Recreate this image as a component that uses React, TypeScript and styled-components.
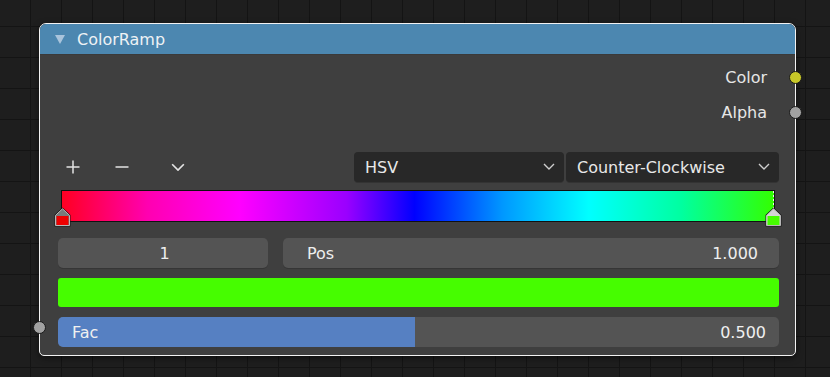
import styled, { createGlobalStyle } from "styled-components";

const GlobalStyle = createGlobalStyle`
  html, body {
    margin: 0;
    padding: 0;
    background: #1e1e1e;
  }
  * { box-sizing: border-box; }
`;

const Canvas = styled.div`
  width: 830px;
  height: 377px;
  padding: 23px 0 0 39px;
  overflow: hidden;
  background-color: #1e1e1e;
  background-image:
    linear-gradient(to right, #141414 1px, transparent 1px),
    linear-gradient(to bottom, #141414 1px, transparent 1px);
  background-size: 31px 31px;
  background-position: -1px 26px;
  font-family: "DejaVu Sans", "Liberation Sans", sans-serif;
  font-size: 16px;
  color: #e6e6e6;
`;

const Node = styled.div`
  position: relative;
  width: 757px;
  height: 333px;
  border: 1px solid #f2f2f2;
  border-radius: 7px 7px 5px 5px;
  background: #3f3f3f;
  display: flex;
  flex-direction: column;
  box-shadow: 0 2px 6px rgba(0, 0, 0, 0.5);
`;

const Header = styled.div`
  height: 31px;
  display: flex;
  align-items: center;
  gap: 12px;
  padding-left: 15px;
  background: #4c87b0;
  border-radius: 6px 6px 0 0;
  border-bottom: 1px solid #3a3a3a;
  color: #eef2f5;
  font-size: 16px;
`;

const Collapse = styled.span`
  width: 0;
  height: 0;
  border-left: 5px solid transparent;
  border-right: 5px solid transparent;
  border-top: 9px solid #a9c4dc;
  margin-top: 1px;
`;

const Outputs = styled.div`
  display: flex;
  flex-direction: column;
  padding-top: 5px;
`;

const OutputRow = styled.div`
  position: relative;
  height: 35px;
  display: flex;
  align-items: center;
  justify-content: flex-end;
  padding-right: 28px;
`;

const Socket = styled.span<{ $color: string; $side: "left" | "right" }>`
  position: absolute;
  top: 50%;
  ${(p) => (p.$side === "right" ? "right: -7px;" : "left: -7px;")}
  width: 13px;
  height: 13px;
  margin-top: -6.5px;
  border-radius: 50%;
  background: ${(p) => p.$color};
  border: 1px solid #1a1a1a;
`;

const Body = styled.div`
  display: flex;
  flex-direction: column;
  padding: 22px 16px 0 18px;
`;

const Toolbar = styled.div`
  height: 30px;
  display: flex;
  align-items: center;
`;

const ToolButton = styled.span`
  width: 30px;
  height: 30px;
  display: flex;
  align-items: center;
  justify-content: center;
  color: #e0e0e0;
`;

const ToolIcons = styled.div`
  display: flex;
  gap: 19px;
  flex: 1;
  & > span:nth-child(3) { margin-left: 7px; }
`;

const Dropdowns = styled.div`
  display: flex;
  gap: 2px;
`;

const Dropdown = styled.div<{ $w: number }>`
  width: ${(p) => p.$w}px;
  height: 30px;
  display: flex;
  align-items: center;
  justify-content: space-between;
  padding: 0 9px 0 11px;
  background: #282828;
  border-radius: 4px;
  color: #e8e8e8;
  box-shadow: 0 1px 0 #333;
`;

const RampWrap = styled.div`
  position: relative;
  height: 37px;
  margin: 8px 4px 0 3px;
`;

const Ramp = styled.div`
  height: 32px;
  border: 1px solid #111;
  background: linear-gradient(
    to right,
    #ff0022 0%,
    #ff00b0 12%,
    #ff00ff 25%,
    #9a00ff 40%,
    #0000ff 49.5%,
    #0099ff 62%,
    #00ffff 74%,
    #00ffa0 87%,
    #33ff00 100%
  );
`;

const Marker = styled.svg<{ $x: number }>`
  position: absolute;
  left: ${(p) => p.$x}px;
  top: 0;
  overflow: visible;
`;

const FieldRow = styled.div`
  display: flex;
  gap: 15px;
  margin-top: 11px;
`;

const Field = styled.div<{ $w?: number; $center?: boolean }>`
  ${(p) => (p.$w ? `width: ${p.$w}px;` : "flex: 1;")}
  height: 30px;
  display: flex;
  align-items: center;
  justify-content: ${(p) => (p.$center ? "center" : "space-between")};
  padding: 0 21px 0 24px;
  background: #545454;
  border-radius: 5px;
  color: #eeeeee;
  box-shadow: 0 1px 0 #363636;
`;

const Swatch = styled.div`
  height: 29px;
  margin-top: 10px;
  background: #46fd00;
  border-radius: 3px;
`;

const Slider = styled.div`
  position: relative;
  height: 30px;
  margin-top: 10px;
  background: #545454;
  border-radius: 5px;
  overflow: hidden;
  display: flex;
  align-items: center;
  justify-content: space-between;
  padding: 0 13px 0 14px;
  color: #f0f0f0;
`;

const SliderFill = styled.div`
  position: absolute;
  left: 0;
  top: 0;
  bottom: 0;
  background: #5680c2;
`;

const SliderLabel = styled.span`
  position: relative;
`;

const InputSocketRow = styled.div`
  position: relative;
`;

const Chevron = ({ size = 12, color = "#cfcfcf" }: { size?: number; color?: string }) => (
  <svg width={size} height={size * 0.6} viewBox="0 0 12 7">
    <path d="M1 1 L6 6 L11 1" fill="none" stroke={color} strokeWidth="1.4" />
  </svg>
);

const MarkerShape = ({ fill, top }: { fill: string; top: string }) => (
  <g>
    <path d="M0.5 19.5 V8 L8.5 0.5 L16.5 8 V19.5 Z" fill="#1a1a1a" />
    <path d="M1.5 18.5 V8.4 L8.5 1.8 L15.5 8.4 V18.5 Z" fill={top} stroke="#b8b8b8" strokeWidth="1" />
    <rect x="2.5" y="9" width="12" height="9" fill={fill} />
  </g>
);

const App = () => {
  const fac = 0.5;
  return (
    <>
      <GlobalStyle />
      <Canvas>
        <Node>
          <Header>
            <Collapse />
            <span>ColorRamp</span>
          </Header>
          <Outputs>
            <OutputRow>
              Color
              <Socket $side="right" $color="#c8c828" />
            </OutputRow>
            <OutputRow>
              Alpha
              <Socket $side="right" $color="#a1a1a1" />
            </OutputRow>
          </Outputs>
          <Body>
            <Toolbar>
              <ToolIcons>
                <ToolButton>
                  <svg width="14" height="14" viewBox="0 0 14 14">
                    <path d="M7 0.5 V13.5 M0.5 7 H13.5" stroke="#e4e4e4" strokeWidth="1.5" />
                  </svg>
                </ToolButton>
                <ToolButton>
                  <svg width="14" height="14" viewBox="0 0 14 14">
                    <path d="M0.5 7 H13.5" stroke="#e4e4e4" strokeWidth="1.5" />
                  </svg>
                </ToolButton>
                <ToolButton>
                  <Chevron size={14} color="#e4e4e4" />
                </ToolButton>
              </ToolIcons>
              <Dropdowns>
                <Dropdown $w={210}>
                  HSV
                  <Chevron />
                </Dropdown>
                <Dropdown $w={213}>
                  Counter-Clockwise
                  <Chevron />
                </Dropdown>
              </Dropdowns>
            </Toolbar>
            <RampWrap>
              <Ramp />
              <Marker $x={-7} width="17" height="37" viewBox="0 0 17 37">
                <g transform="translate(0,17)">
                  <MarkerShape fill="#ee0000" top="#7a7a7a" />
                </g>
              </Marker>
              <Marker $x={704} width="17" height="37" viewBox="0 0 17 37">
                <path d="M8.5 1 V18" stroke="#f0f0f0" strokeWidth="1" strokeDasharray="2 2" />
                <g transform="translate(0,17)">
                  <MarkerShape fill="#46fd00" top="#d4d4d4" />
                </g>
              </Marker>
            </RampWrap>
            <FieldRow>
              <Field $w={210} $center>
                1
              </Field>
              <Field>
                <span>Pos</span>
                <span>1.000</span>
              </Field>
            </FieldRow>
            <Swatch />
            <InputSocketRow>
              <Slider>
                <SliderFill style={{ width: `${fac * 100 - 0.5}%` }} />
                <SliderLabel>Fac</SliderLabel>
                <SliderLabel>0.500</SliderLabel>
              </Slider>
              <Socket $side="left" $color="#a1a1a1" style={{ left: -25 }} />
            </InputSocketRow>
          </Body>
        </Node>
      </Canvas>
    </>
  );
};

export default App;
